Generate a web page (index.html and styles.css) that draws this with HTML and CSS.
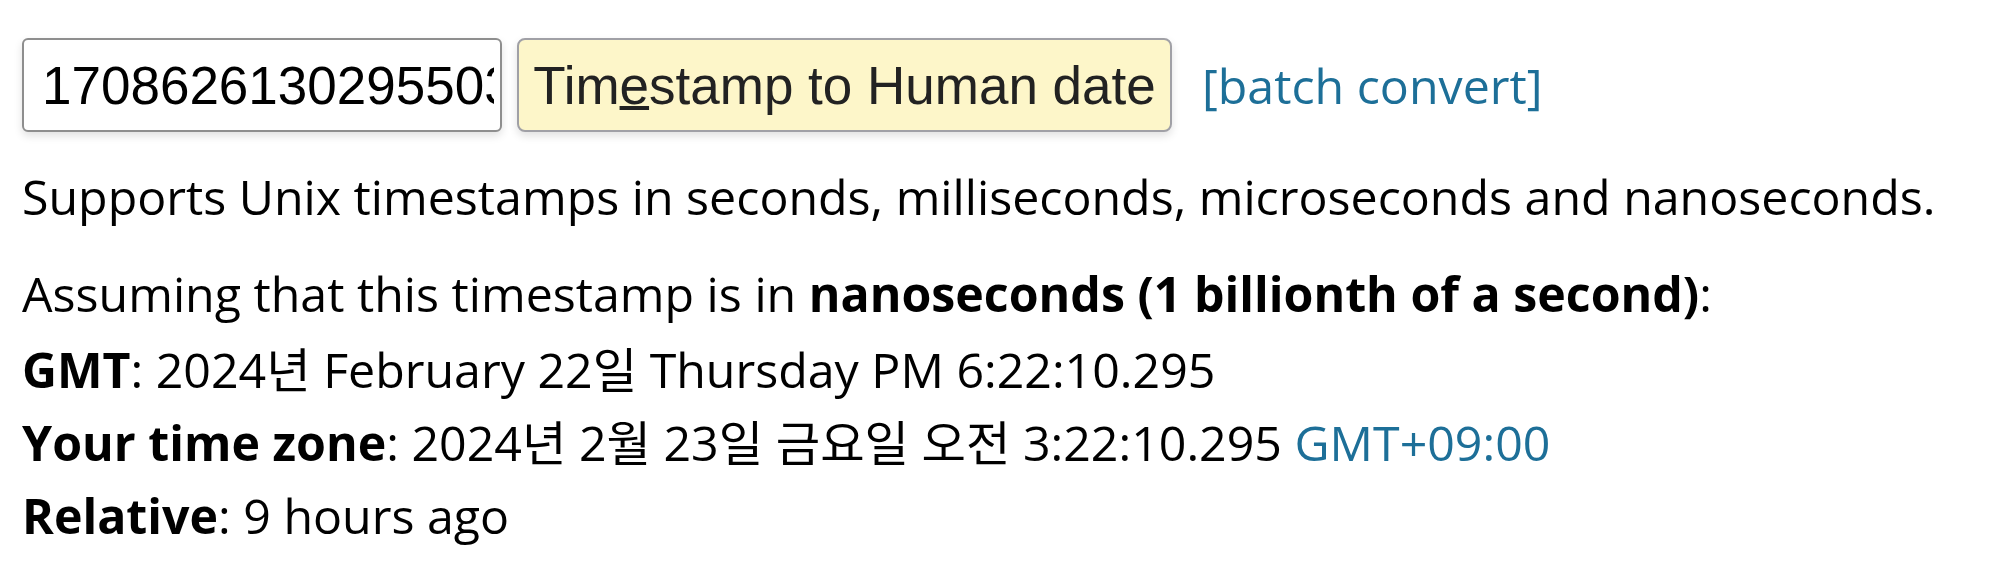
FILE: index.html
```html
<!DOCTYPE html>
<html>
<head>
  <title>Timestamp to Human date</title>
  <meta charset="utf-8">
  <link rel="stylesheet" href="styles.css">
</head>
<body>
  <form class="convert">
    <input class="ts" type="text" value="1708626130295503000">
    <button class="go" type="button">Tim<u>e</u>stamp to Human date</button>
    <a class="batch" href="#">[batch convert]</a>
  </form>
  <p class="note">Supports Unix timestamps in seconds, milliseconds, microseconds and nanoseconds.</p>
  <div class="result">
    <div class="assume">Assuming that this timestamp is in <b>nanoseconds (1 billionth of a second)</b>:</div>
    <div><b>GMT</b>: 2024년 February 22일 Thursday PM 6:22:10.295</div>
    <div><b>Your time zone</b>: 2024년 2월 23일 금요일 오전 3:22:10.295 <a href="#">GMT+09:00</a></div>
    <div><b>Relative</b>: 9 hours ago</div>
  </div>
</body>
</html>
```

FILE: styles.css
```css
body {
  margin: 0;
  padding: 38px 22px 0;
  background: #fff;
  color: #000;
  font-family: "Open Sans", "Noto Sans CJK KR", sans-serif;
  font-size: 48.3px;
  line-height: 73px;
}
a {
  color: #1d6f98;
  text-decoration: none;
}
.convert {
  display: flex;
  align-items: center;
  margin: 0;
}
.ts, .go {
  box-sizing: border-box;
  height: 94px;
  font-family: "Liberation Sans", Arial, sans-serif;
  font-size: 53px;
  border: 2px solid #8e8e8e;
  box-shadow: 0 4px 8px rgba(0,0,0,.12);
}
.ts {
  width: 480px;
  padding: 0 6px 0 18px;
  border-radius: 6px;
  color: #000;
}
.go {
  width: 655px;
  margin-left: 15px;
  padding: 0;
  white-space: nowrap;
  border-radius: 8px;
  border-color: #a0a0a6;
  background: #fdf6c9;
  color: #222;
}
.go u {
  text-decoration-thickness: 4px;
}
.batch {
  margin-left: 30px;
}
.note {
  margin: 28px 0 24px;
}
.assume {
  margin-bottom: 3px;
}
b {
  font-weight: 700;
}
```
